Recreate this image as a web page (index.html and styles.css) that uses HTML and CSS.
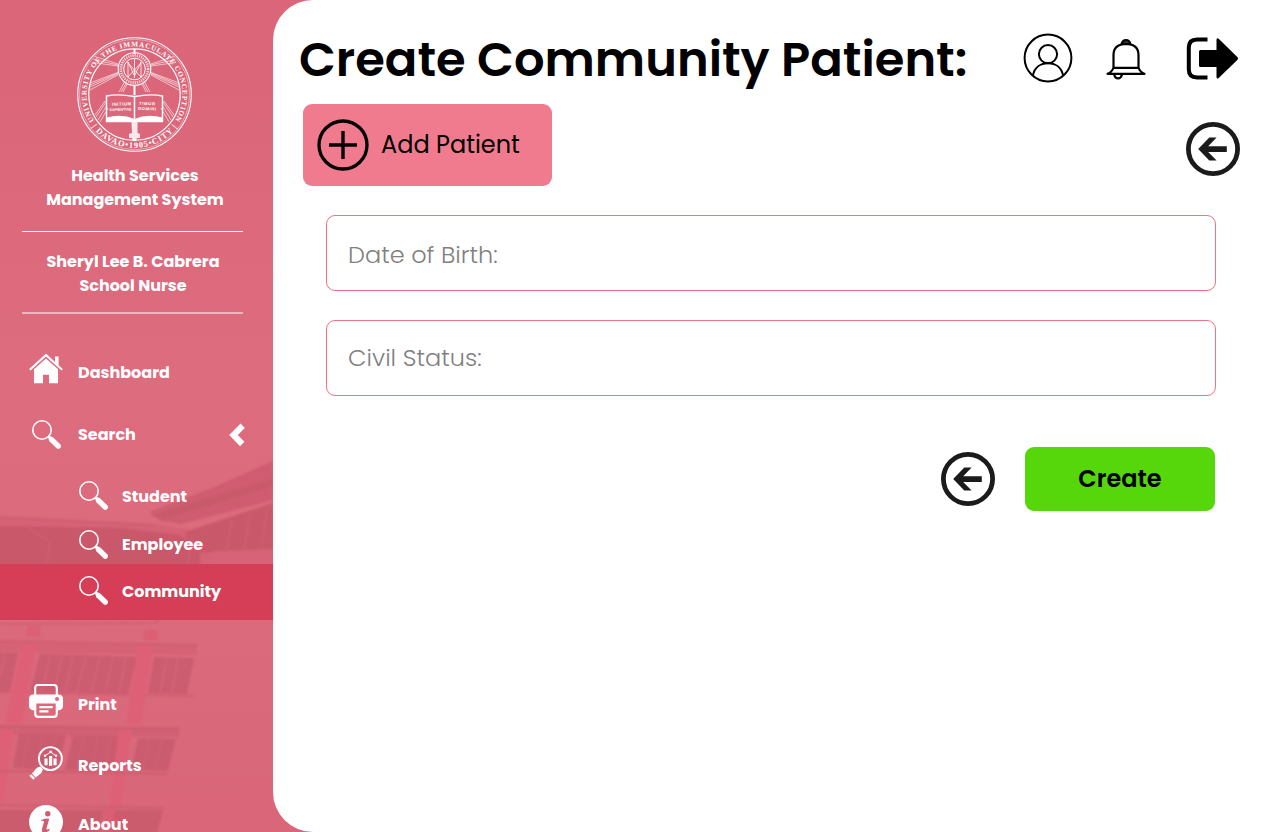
FILE: index.html
```html
<!DOCTYPE html>
<html lang="en">
<head>
<meta charset="utf-8">
<title>Create Community Patient</title>
<link rel="stylesheet" href="styles.css">
</head>
<body>
<svg class="defs" width="0" height="0" aria-hidden="true">
  <symbol id="lens" viewBox="0 0 29 29">
    <circle cx="10" cy="10" r="9.2" fill="none" stroke="currentColor" stroke-width="1.6"/>
    <path d="M16 17.6Q15.8 15.8 17.8 15.9L21 17.2L28.2 24.2Q29.7 26 28.4 27.7Q26.6 29.7 24.6 28.3L17.4 21.3Z" fill="currentColor"/>
  </symbol>
  <symbol id="back" viewBox="0 0 54 54">
    <circle cx="27" cy="27" r="24.6" fill="none" stroke="currentColor" stroke-width="4.8"/>
    <path d="M12.2 27L23.3 15.6H30.6L22.2 24.2H40.8V30H22.2L30.6 38.5H23.3Z" fill="currentColor"/>
  </symbol>
</svg>
<div class="app">
  <aside class="sidebar">
    <svg class="photo" viewBox="0 0 330 832" aria-hidden="true">
      <defs>
        <linearGradient id="haze" x1="0" y1="0" x2="0" y2="1"><stop offset="0" stop-color="#db6579"/><stop offset=".45" stop-color="#dd6c7e"/><stop offset=".75" stop-color="#da6a7c"/><stop offset="1" stop-color="#d96779"/></linearGradient>
        <filter id="soft"><feGaussianBlur stdDeviation="1"/></filter>
      </defs>
      <rect width="330" height="832" fill="url(#haze)"/>
      <g filter="url(#soft)">
        <path d="M-4 517L155 524L190 530L330 500V566H-4Z" fill="#d66276"/>
        <path d="M-4 526L120 528L180 535L200 550V566H-4Z" fill="#c8586b"/>
        <path d="M-4 517L155 525" stroke="#cb5d70" stroke-width="1.5"/>
        <path d="M273 461L215 487L150 512L158 519L180 524L273 500Z" fill="#cf5c6f"/>
        <path d="M150 514L273 479V487L165 522Z" fill="#c95a6c"/>
        <path d="M185 532L273 503V551L190 553Z" fill="#c9586b"/>
        <path d="M214 551L273 549V566H209Z" fill="#d66478"/>
        <path d="M28 528L50 542L47 566M192 535L188 566M232 520L226 552M250 514L244 552M267 509L261 550" stroke="#cd5e71" stroke-width="2" fill="none"/>
        <path d="M150 515L273 472M160 522L273 488" stroke="#d26074" stroke-width="1.5"/>
        <path d="M-4 624L155 623L160 620" stroke="#ce5d70" stroke-width="1.6" fill="none"/>
        <path d="M-4 641L197 645L196 655L-4 652Z" fill="#d66275"/>
        <path d="M-4 641L197 645" stroke="#ce5d70" stroke-width="1.4"/>
        <path d="M-4 653H18L10 691H-4ZM40 654L137 657L128 694L30 691ZM154 657L194 658L187 694L148 693Z" fill="#cc5c6f"/>
        <path d="M50 656L42 691M62 656L54 691M73 656L65 692M86 657L76 693M100 657L91 693M113 657L105 693M126 657L119 693M167 658L160 693M178 658L172 693M5 654L0 677" stroke="#d46578" stroke-width="1.6"/>
        <path d="M-4 692L194 696" stroke="#d15f72" stroke-width="2"/>
        <path d="M22 644L37 644L22 723H5ZM138 645L153 646L141 724H126Z" fill="#de6076"/>
        <path d="M28 626H40V636H26ZM145 630H158V640H143Z" fill="#dc5e73"/>
        <path d="M-4 726L180 729L179 737L-4 735Z" fill="#d26074"/>
        <path d="M-4 726L180 729" stroke="#cc5c6f" stroke-width="2"/>
        <path d="M19 733L66 735L58 770L13 768ZM73 735L120 736L114 771L65 770ZM138 738L176 739L168 771L131 770Z" fill="#cb5b6f"/>
        <path d="M29 734L22 768M43 734L36 768M56 735L48 768M84 736L76 770M98 736L91 770M111 736L104 770M149 739L143 771M162 739L155 771" stroke="#d06175" stroke-width="1.6"/>
        <path d="M-4 730H14L3 802H-4ZM119 730H132L121 806H109Z" fill="#de6076"/>
        <path d="M-4 771L168 774M-4 805L163 808" stroke="#ce5d70" stroke-width="2"/>
        <path d="M-4 810H163L156 836H-4Z" fill="#cb5b6d"/>
        <path d="M103 809H115L110 836H99Z" fill="#da5f74"/>
      </g>
    </svg>

    <div class="brand">
      <svg class="seal" viewBox="0 0 117 117" role="img" aria-label="University seal">
        <defs>
          <path id="seal-top" d="M18.2 84.6A48 48 0 1 1 98.8 84.6"/>
          <path id="seal-bottom" d="M15.8 90.7A53.5 53.5 0 0 0 101.2 90.7"/>
        </defs>
        <g fill="none" stroke="#fff">
          <circle cx="58.5" cy="58.5" r="56.8" stroke-width="1.1"/>
          <circle cx="58.5" cy="58.5" r="55.2" stroke-width=".6" opacity=".7"/>
          <circle cx="58.5" cy="58.5" r="45.7" stroke-width="1.2"/>
          <g stroke-width=".7" opacity=".85">
            <path d="M42 29L17.5 23.5M42 28L19 20.5M42 30L17 26.5M75 29L99 23.5M75 28L98 20.5M75 30L100 26.5M42 37L14 49M42 38L14 51M42 39L14 54M43 36L14 47M75 37L103 49M75 38L103 51M75 39L103 54M74 36L103 47"/>
            <path d="M49 45L43 56M50 47L45 56M51 48L47 56M68 45L74 56M67 47L72 56M66 48L70 56M29 65L19 79M30 66L20 81M31 69L22 84M32 72L24 86M88 65L98 79M87 66L97 81M86 69L95 84M85 72L93 86"/>
          </g>
          <path d="M58.5 13V18M58.5 49V59" stroke-width="2"/>
          <circle cx="58.5" cy="33" r="16.3" stroke-width="1.1"/>
          <circle cx="58.5" cy="33" r="13.6" stroke-width="2.7" stroke-dasharray="1.2 1" opacity=".75"/>
          <circle cx="58.5" cy="33" r="10.8" stroke-width="1"/>
          <path d="M52 41V26L58.5 40L65 26V41M52 27L65 41M65 27L52 41M58.5 23V42" stroke-width=".8"/>
          <path d="M30.5 60Q42 57.5 58.5 60.5Q75 57.5 86.5 60V85.5H30.5Z" stroke-width="1.4"/>
          <path d="M58.5 60V83" stroke-width="1.5"/>
        </g>
        <path d="M30.5 81.5Q46 77.5 58.5 83Q71 77.5 86.5 81.5V86H30.5Z" fill="#fff"/>
        <path d="M55.5 86H61.5V97L64 98V102H61L60 105H57L56 102H53V98L56 97Z" fill="#fff" opacity=".85"/>
        <g class="seal-motto">
          <text x="36" y="69.5" textLength="19" transform="rotate(-2 45 69)">INITIUM</text>
          <text class="narrow" x="33.5" y="74.7" textLength="22" transform="rotate(-2 45 74)">SAPIENTIAE</text>
          <text x="63" y="69" textLength="16" transform="rotate(2 71 69)">TIMOR</text>
          <text x="62" y="74.2" textLength="18" transform="rotate(2 71 74)">DOMINI</text>
        </g>
        <text class="seal-ring"><textPath href="#seal-top" textLength="205">UNIVERSITY OF THE IMMACULATE CONCEPTION</textPath></text>
        <text class="seal-ring seal-city"><textPath href="#seal-bottom" textLength="98">| DAVAO•1905•CITY |</textPath></text>
      </svg>
      <p class="system">Health Services<br>Management System</p>
    </div>
    <hr class="rule">
    <p class="user">Sheryl Lee B. Cabrera<br>School Nurse</p>
    <hr class="rule rule-soft">

    <nav class="nav">
      <a class="item">
        <svg class="icon icon-home" width="34" height="31" viewBox="0 0 34 31"><path d="M17 .5L26 9V3.6H29.6V12.2L33.8 16L32.5 17.4L17 3.4L1.5 17.4L.2 16Z M17 5.6L29 16.3V30.3H20V21.8H14V30.3H5V16.3Z" fill="currentColor"/></svg>
        <span>Dashboard</span>
      </a>
      <a class="item">
        <svg class="icon icon-lens" width="29" height="29"><use href="#lens"/></svg>
        <span>Search</span>
        <svg class="chevron" width="16" height="24" viewBox="0 0 16 24"><path d="M11.6 .4L15.8 4.9L8.8 12L15.4 18.8L11 23.2L.2 11.9Z" fill="currentColor"/></svg>
      </a>
      <div class="subnav">
        <a class="item sub"><svg class="icon" width="29" height="29"><use href="#lens"/></svg><span>Student</span></a>
        <a class="item sub employee"><svg class="icon" width="29" height="29"><use href="#lens"/></svg><span>Employee</span></a>
        <a class="item sub community"><svg class="icon" width="29" height="29"><use href="#lens"/></svg><span>Community</span></a>
      </div>
      <a class="item low">
        <svg class="icon icon-low" width="34" height="34" viewBox="0 0 34 34"><path d="M6.2 11V4Q6.2 1 9 1H25Q27.8 1 27.8 4V11" fill="none" stroke="currentColor" stroke-width="2.1"/><path fill-rule="evenodd" d="M4.5 10.5H29.5Q34 10.5 34 15V21.5Q34 26 28.8 26.5V30Q28.8 34 25 34H9Q5.2 34 5.2 30V26.5Q0 26 0 21.5V15Q0 10.5 4.5 10.5ZM7.3 19.4V29.8Q7.3 31.8 9.2 31.8H24.8Q26.7 31.8 26.7 29.8V19.4ZM28 13A2 2 0 1 0 28 17A2 2 0 1 0 28 13Z" fill="currentColor"/><path d="M10.4 23.2H23.7M10.4 27.3H19.5" stroke="currentColor" stroke-width="2.2"/></svg>
        <span>Print</span>
      </a>
      <a class="item low reports">
        <svg class="icon icon-low" width="34" height="34" viewBox="0 0 34 34"><circle cx="21.4" cy="12.6" r="11.5" fill="none" stroke="currentColor" stroke-width="1.9"/><path d="M11.2 20.6L13.9 23.2L12.6 26.8L6.8 31.6L2.9 27.6L8 21.8ZM2.2 28.2L6 32L4.3 33.8L.3 29.8Z" fill="currentColor"/><path d="M15.5 12.6H18.6V19.2H15.5ZM20 10H23.2V19.8H20ZM24.5 12.6H27.6V19.2H24.5Z" fill="currentColor"/><path d="M16 9.8L21.6 6L27 9.8" fill="none" stroke="currentColor"/><circle cx="16" cy="9.8" r="1.2" fill="currentColor"/><circle cx="21.6" cy="5.8" r="1.3" fill="currentColor"/><circle cx="27" cy="9.8" r="1.2" fill="currentColor"/></svg>
        <span>Reports</span>
      </a>
      <a class="item low about">
        <svg class="icon icon-low" width="34" height="34" viewBox="0 0 34 34"><circle cx="17" cy="17" r="17" fill="currentColor"/><circle class="cut" cx="18.8" cy="8.8" r="2.7"/><path class="cut" d="M12.4 15Q16 13.2 20.3 13.7L17.5 23.3Q17.2 25.3 19.7 24L20.8 23.4L20.1 25.8Q15.2 28.8 13.2 26.7Q12.5 25.8 13.1 23.6L15 16.8Q15.2 15.5 12.1 15.9Z"/></svg>
        <span>About</span>
      </a>
    </nav>
  </aside>

  <main class="panel">
    <header class="top">
      <h1>Create Community Patient:</h1>
      <div class="actions">
        <svg width="50" height="50" viewBox="0 0 50 50" fill="none" stroke="#000" stroke-width="2"><circle cx="25" cy="25" r="23.4"/><circle cx="25" cy="21.2" r="9.1"/><path d="M9.9 42.5C11.5 34.5 17.5 30.2 25 30.2S38.5 34.5 40.1 42.5"/></svg>
        <svg width="40" height="42" viewBox="0 0 40 42" fill="none" stroke="#000" stroke-width="2.2" stroke-linejoin="round"><path d="M7.5 29.5V17Q7.5 6.2 20 5.8Q32.5 6.2 32.5 17V29.5Q34 34.2 38.5 35.8H1.5Q6 34.2 7.5 29.5Z"/><path d="M7 29.8H33M8.2 36.5Q9 40.4 12 40.4T16 36.5"/><path d="M15.6 6Q16.5 2 20 2T24.4 6Z" fill="#333"/></svg>
        <svg width="52" height="44" viewBox="0 0 52 44"><path d="M21.5 2.4H11Q2.8 2.4 2.8 10.5V32.3Q2.8 40.5 11 40.5H21.5" fill="none" stroke="#000" stroke-width="4"/><path d="M14.5 13H30.5V3Q30.5 .3 32.7 1.8L51.3 19.9Q52.7 21.5 51.3 23.1L32.7 41Q30.5 42.5 30.5 39.8V30H14.5Q13 30 13 28.5V14.5Q13 13 14.5 13Z"/></svg>
      </div>
    </header>
    <div class="tools">
      <button class="add" type="button">
        <svg width="52" height="52" viewBox="0 0 52 52" fill="none" stroke="#000"><circle cx="26" cy="26" r="24" stroke-width="3.3"/><path d="M12 26H40M26 12V40" stroke-width="3.4"/></svg>
        <span>Add Patient</span>
      </button>
      <svg class="back" width="54" height="54"><use href="#back"/></svg>
    </div>
    <form class="form">
      <div class="field"><span>Date of Birth:</span></div>
      <div class="field status"><span>Civil Status:</span></div>
      <div class="submit">
        <svg class="back" width="54" height="54"><use href="#back"/></svg>
        <button class="create" type="button">Create</button>
      </div>
    </form>
  </main>
</div>
</body>
</html>
```
FILE: styles.css
```css
* { box-sizing: border-box; }
body {
  margin: 0;
  font-family: Poppins, Inter, "Open Sans", sans-serif;
  background: #db687b;
}
p, h1 { margin: 0; }
svg { display: block; flex: none; }
button { border: 0; margin: 0; padding: 0; font: inherit; color: #000; }
.defs { position: absolute; }
.app { display: flex; height: 832px; overflow: hidden; position: relative; }

/* Sidebar */
.sidebar { width: 273px; flex: none; color: #fff; font-weight: 700; font-size: 16px; line-height: 24px; }
.photo { position: absolute; left: 0; top: 0; width: 330px; height: 832px; }
.brand, .rule, .user, .nav { position: relative; }
.brand { padding-top: 36px; width: 270px; }
.seal { width: 117px; height: 117px; margin-left: 76px; }
.seal-ring { font: 700 7.2px "Liberation Serif", serif; fill: #fff; }
.seal-city { font-size: 8.4px; }
.seal-motto { font: 700 4.2px "Liberation Sans", sans-serif; fill: #fff; }
.seal-motto .narrow { font-size: 3.6px; }
.system { text-align: center; margin-top: 11px; }
.rule { border: 0; height: 1px; width: 221px; margin: 19px 0 0 22px; background: #fff; }
.user { width: 266px; text-align: center; padding-top: 18px; }
.rule-soft { height: 2px; margin-top: 14px; background: rgba(255, 255, 255, .5); }

.nav { padding-top: 28px; }
.item { display: flex; align-items: center; height: 62px; padding-left: 29px; }
.icon { margin-right: 15px; }
.icon-home { margin-top: -9px; }
.icon-lens { margin: -1px 17px 0 3px; }
.chevron { margin: -1px 28px 0 auto; }
.subnav { padding: 7px 0 55px; }
.sub { padding-left: 79px; height: 48px; }
.sub .icon { margin: -4px 14px 0 0; }
.employee { height: 43px; padding-top: 4px; }
.employee .icon { margin-top: -1px; }
.community { height: 56px; padding-bottom: 1px; background: #d63d56; }
.community .icon { margin-top: -3px; }
.low { height: 60px; }
.icon-low { margin-top: -9px; }
.reports { height: 61px; padding-top: 1px; }
.reports .icon-low { margin-top: -6px; }
.about { height: 58px; }
.about .icon-low { margin-top: -7px; }
.cut { fill: #d15d70; }

/* Content panel */
.panel { flex: 1; position: relative; background: #fff; border-radius: 40px 0 0 40px; padding: 33px 40px 0 26px; color: #000; }
.top { display: flex; justify-content: space-between; height: 71px; }
h1 { font-size: 48px; line-height: 52px; font-weight: 600; white-space: nowrap; padding-top: 1px; }
.actions { display: flex; align-items: flex-start; margin-right: 2px; }
.actions svg:nth-child(2) { margin: 5px 40px 0 33px; }
.actions svg:nth-child(3) { margin-top: 4px; }
.tools { display: flex; justify-content: space-between; align-items: flex-start; padding-left: 4px; }
.add { width: 249px; height: 82px; border-radius: 9px; background: #f07b8e; display: flex; align-items: center; padding-left: 14px; gap: 12px; font-size: 24px; font-weight: 400; white-space: nowrap; }
.add span { padding-bottom: 2px; }
.back { color: #1b1b1b; }
.tools .back { margin-top: 18px; }
.form { width: 890px; margin: 29px 0 0 27px; }
.field { height: 76px; border: 1px solid #ec7288; border-radius: 9px; display: flex; align-items: center; padding: 3px 0 0 21px; font-size: 24px; font-weight: 300; color: #808080; }
.status { margin-top: 29px; padding: 0 0 2px 21px; }
.submit { display: flex; justify-content: flex-end; align-items: center; gap: 30px; margin: 51px 1px 0 0; }
.create { width: 190px; height: 64px; padding-bottom: 2px; border-radius: 9px; background: #56d70c; font-size: 24px; font-weight: 600; }
```
